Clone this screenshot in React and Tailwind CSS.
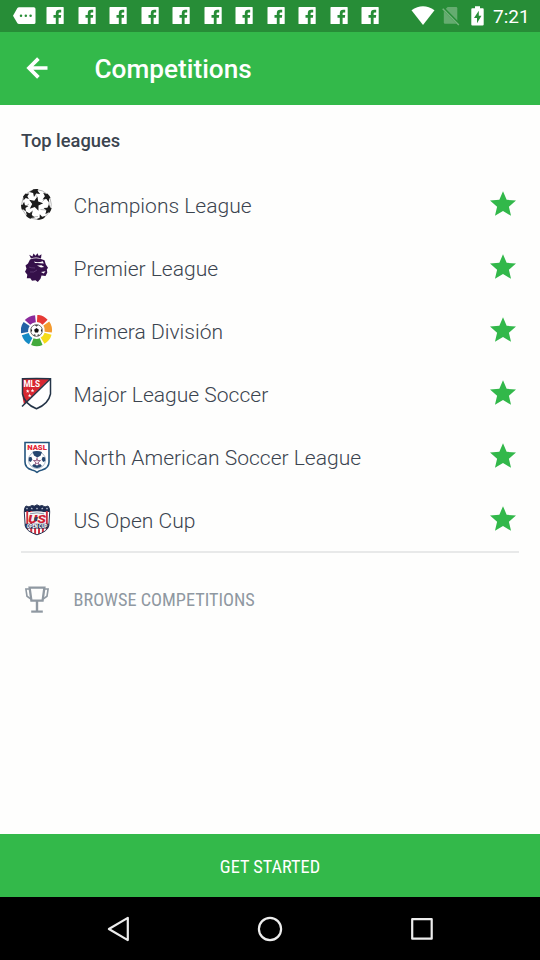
import React from 'react';

const starPoints = (cx, cy, r, rot = 0, inner = 0.4) =>
  Array.from({ length: 10 }, (_, i) => {
    const a = ((rot - 90 + i * 36) * Math.PI) / 180;
    const d = i % 2 ? r * inner : r;
    return `${(cx + d * Math.cos(a)).toFixed(2)},${(cy + d * Math.sin(a)).toFixed(2)}`;
  }).join(' ');

function ChampionsLogo() {
  return (
    <svg width="32" height="32" viewBox="0 0 32 32">
      <clipPath id="ball"><circle cx="15.5" cy="15.5" r="15.5" /></clipPath>
      <circle cx="15.5" cy="15.5" r="14.8" fill="#fff" stroke="#999" strokeWidth="0.7" />
      <g clipPath="url(#ball)" fill="#1c1c1c">
        <polygon points={starPoints(14.6, 14.8, 7.6, 14, 0.45)} />
        <polygon points={starPoints(14, 2.2, 5.8, 190, 0.45)} />
        <polygon points={starPoints(26.5, 7.6, 5.8, 240, 0.45)} />
        <polygon points={starPoints(27.8, 20.8, 5.6, 290, 0.45)} />
        <polygon points={starPoints(20.5, 30, 5, 340, 0.45)} />
        <polygon points={starPoints(8.3, 26.8, 5.8, 35, 0.45)} />
        <polygon points={starPoints(2.4, 18, 5.2, 80, 0.45)} />
        <polygon points={starPoints(4.2, 7, 4.8, 130, 0.45)} />
        <path d="M15.5 7.8L14.5 5M21.5 12.5L24.5 9.5M19.5 20.5L25 21M11.5 21.5L9.5 24.5M8 15L5 17M17 27.5L11 28M28 12V17" stroke="#777" strokeWidth="0.5" />
      </g>
    </svg>
  );
}

function PremierLogo() {
  return (
    <svg width="32" height="32" viewBox="0 0 32 32">
      <g fill="#35104a">
        <path d="M10 6.4 L8.2 2.8 11.4 4.4 12.5 1.6 14.6 3.8 16.4 1.2 17.8 4 20.5 2.2 20 6.4 Q15 4.6 10 6.4Z" />
        <path d="M9 7.4 Q16 4.8 23.5 8.2 L24.8 12.5 27 15.7 25.8 17.4 26.3 20.5 24.5 24 20.5 23.6 19.5 26.8 16.8 30 14.5 28.3 11 28.8 9.3 26.3 5.8 26.2 6.3 22.8 4 19.8 5.5 16.8 4.5 13.5 7 11.5Z" />
      </g>
      <path d="M13 9.4 Q16.5 11 21.8 9.3 L22.8 11.6 Q18 10.6 14 11ZM16 13.6 L20.5 13.2 23.2 15 20 15.4ZM20 20 L24.6 19.2 22.6 21.6Z" fill="#fff" />
      <path d="M8 15 Q10 16 14 16 M9 20 Q13 21 16 18" stroke="#7b5990" strokeWidth="0.5" fill="none" />
    </svg>
  );
}

const ligaColors = ['#e63a35', '#f39a2f', '#f5dc18', '#43aa3c', '#168bc5', '#2362a5', '#8b2b9b'];

function LigaLogo() {
  return (
    <svg width="32" height="32" viewBox="0.5 0.5 32 32">
      {ligaColors.map((color, i) => (
        <path key={color} d="M10.4 1.4 Q16 -.9 21.8 1.7 L19.2 8.4 Q16.3 7 13 8.1Z" fill={color} transform={`rotate(${24 + i * 51.43} 16 16)`} />
      ))}
      <circle cx="16" cy="16" r="5.9" fill="#fff" stroke="#333" strokeWidth="0.7" />
      <polygon points="16,13.5 18.4,15.2 17.5,18 14.5,18 13.6,15.2" fill="#111" />
      <path d="M14.2 10.7h3.6L16 12zM21.4 14l-1.1 2 1 1.8zM10.6 14l1.1 2-1 1.8zM12.7 20.5l2-.7.2 1.7zM19.3 20.5l-2-.7-.2 1.7z" fill="#111" />
    </svg>
  );
}

function MlsLogo() {
  return (
    <svg width="32" height="34" viewBox="0.5 0 32 34">
      <path d="M2 1.8 Q16 1 30 1.8 V17 Q28 27 16 31.7 Q4 27 2 17Z" fill="#fff" />
      <path d="M2 2H29L3.5 27.5 Q2 23 2 16Z" fill="#d82731" />
      <path d="M30 1.8L1.5 29.5" stroke="#243447" strokeWidth="1.5" />
      <path d="M2 1.8 Q16 1 30 1.8 V17 Q28 27 16 31.7 Q4 27 2 17Z" fill="none" stroke="#243447" strokeWidth="1.5" />
      <text x="3" y="9.8" fill="#fff" fontFamily="Roboto, sans-serif" fontWeight="700" fontSize="8.5" textLength="16.5" lengthAdjust="spacingAndGlyphs">MLS</text>
      <g fill="#fff">
        <polygon points={starPoints(7.2, 14.2, 2)} />
        <polygon points={starPoints(12, 13.6, 2)} />
        <polygon points={starPoints(9.2, 18.6, 2)} />
      </g>
    </svg>
  );
}

function NaslLogo() {
  return (
    <svg width="32" height="34" viewBox="0 0 32 34">
      <path d="M4 2.5H28V22Q28 28 21 30Q18 30.7 16 32.3Q14 30.7 11 30Q4 28 4 22Z" fill="#fff" stroke="#24547d" strokeWidth="1.6" />
      <text x="6.2" y="9.8" fill="#e52635" fontFamily="Roboto, sans-serif" fontWeight="900" fontSize="7.5" textLength="19.6" lengthAdjust="spacingAndGlyphs">NASL</text>
      <circle cx="16" cy="20" r="8.5" fill="#fff" stroke="#8a9eb4" strokeWidth="0.7" />
      <g fill="#25466f">
        <path d="M11.5 11.7Q16 10 21 12L19.5 15.8 16.3 17.6 13 15.5Z" />
        <path d="M7.8 17.5L10.3 16.8 11.4 19.4 9.8 22 7.8 21ZM24.2 17.5L21.7 16.8 20.6 19.4 22.2 22 24.2 21Z" />
        <path d="M11 26L12.8 24 16 25.5 19.2 24 21 26Q16 30 11 26Z" />
      </g>
      <polygon points={starPoints(16, 21.7, 4.6)} fill="#7d3e69" />
      <polygon points={starPoints(16, 21.8, 2.7)} fill="#efdfe8" />
    </svg>
  );
}

function OpenCupLogo() {
  return (
    <svg width="32" height="34" viewBox="0 0 32 34">
      <clipPath id="shield"><path d="M5 3Q8 5 11 2.5Q13.5 4 16 1.8Q18.5 4 21 2.5Q24 5 27 3Q29 5 28.7 9L27.8 23Q26.5 28.5 16 31.8Q5.5 28.5 4.2 23L3.3 9Q3 5 5 3Z" /></clipPath>
      <g clipPath="url(#shield)">
        <path fill="#fff" d="M0 0H32V34H0z" />
        <path fill="#1d2b50" d="M0 0H32V9H0z" />
        <path d="M6.3 8V29M10.2 8V31M14.1 21V32M18 21V32M21.9 21V31M25.8 8V29" stroke="#cf3040" strokeWidth="2" />
        <path d="M7.5 9.4Q16 7 24.5 9.4V12.5H7.5Z" fill="#f8f8f8" />
        {[6, 10.8, 16, 21.2, 26].map((x) => <polygon key={x} points={starPoints(x, 5.6, 1.25)} fill="#dfe5ef" />)}
        <path d="M9 10.8Q16 8.9 23 10.8" stroke="#718098" strokeWidth="0.8" fill="none" />
        <path fill="#f8f2f2" d="M7.5 12h17v8H7.5z" />
        <path fill="#1d2b50" d="M4 20.8h24v4.6H4z" />
      </g>
      <text x="7" y="20" fill="#ce2133" fontFamily="Roboto, sans-serif" fontStyle="italic" fontWeight="900" fontSize="10" textLength="18" lengthAdjust="spacingAndGlyphs">US</text>
      <path d="M13.4 14.4L17 13.7 16 18.2 13.4 17.8Z" fill="#2f4164" />
      <text x="5.8" y="24.9" fill="#fff" fontFamily="Roboto, sans-serif" fontWeight="900" fontSize="4.8" textLength="20.4" lengthAdjust="spacingAndGlyphs">OPEN CUP</text>
      <path d="M5 3Q8 5 11 2.5Q13.5 4 16 1.8Q18.5 4 21 2.5Q24 5 27 3Q29 5 28.7 9L27.8 23Q26.5 28.5 16 31.8Q5.5 28.5 4.2 23L3.3 9Q3 5 5 3Z" fill="none" stroke="#283553" />
    </svg>
  );
}

const leagues = [
  ['Champions League', ChampionsLogo],
  ['Premier League', PremierLogo],
  ['Primera División', LigaLogo],
  ['Major League Soccer', MlsLogo],
  ['North American Soccer League', NaslLogo],
  ['US Open Cup', OpenCupLogo],
];

function StatusBar() {
  return (
    <div className="flex h-[31.5px] shrink-0 items-start bg-[#278d37] pl-[12.5px] pr-[11px] text-white">
      <svg className="mt-[7px] shrink-0" width="23" height="18" viewBox="0 0 23 18">
        <path d="M6 .2H20.8Q22.5.2 22.5 1.9V15.4Q22.5 17.1 20.8 17.1H6Q5 17.1 4.4 16.3L0 8.7 4.4 1Q5 .2 6 .2Z" fill="currentColor" />
        <g fill="#278d37"><circle cx="8" cy="8.7" r="1.25" /><circle cx="12.8" cy="8.7" r="1.25" /><circle cx="17.6" cy="8.7" r="1.25" /></g>
      </svg>
      <div className="ml-[10.7px] mt-[7px] flex gap-[13.5px]">
        {Array.from({ length: 11 }, (_, i) => (
          <svg key={i} width="18" height="18" viewBox="0 0 18 18">
            <rect x="0.5" y="0.1" width="17.2" height="17" rx="0.6" fill="currentColor" />
            <path d="M9.8 17.1V10.8H7.5V8.1H9.8V6.2Q9.8 2.8 13.2 2.8H15.2V5.4H13.8Q12.6 5.4 12.6 6.6V8.1H15.2L14.9 10.8H12.6V17.1Z" fill="#278d37" />
          </svg>
        ))}
      </div>
      <svg className="ml-auto mt-[6px]" width="24" height="20" viewBox="0 0 24 20"><path d="M.5 4.2Q12-3.8 23.5 4.2L12 19Z" fill="currentColor" /></svg>
      <svg className="ml-[7px] mt-[6px]" width="18" height="20" viewBox="0 0 18 20">
        <path d="M5.6.9H14Q15.3.9 15.3 2.2V17.8H3Q1.8 17.8 1.8 16.4V5Z" fill="#65ac70" />
        <path d="M.7 1.8L17 18.3" stroke="#278d37" strokeWidth="3" /><path d="M.7 2.7L16.8 18.9" stroke="#76b57f" strokeWidth="1.4" />
      </svg>
      <svg className="ml-[11px] mt-[5.5px]" width="13" height="20" viewBox="0 0 13 20">
        <path d="M4 .2H9V2.2H11.8Q12.7 2.2 12.7 3.2V18.4Q12.7 19.5 11.6 19.5H1.4Q.3 19.5.3 18.4V3.2Q.3 2.2 1.3 2.2H4Z" fill="currentColor" />
        <path d="M7.8 4.8L3 12H6V17.2L10.5 9.8H7.8Z" fill="#278d37" />
      </svg>
      <span className="ml-[9px] mt-[5px] w-[36px] text-[19px] leading-[23px]">7:21</span>
    </div>
  );
}

export default function App() {
  return (
    <div className="flex h-[960px] w-[540px] flex-col overflow-hidden bg-[#fefefd] font-[Roboto,sans-serif] text-[#3b444f]">
      <StatusBar />
      <header className="flex h-[73.5px] shrink-0 items-center bg-[#33b94a] pl-[26px] text-white">
        <svg width="22" height="22" viewBox="0 0 22 22" fill="none" stroke="currentColor" strokeWidth="3.7"><path d="M21.5 11H3M12.4 1.6L3 11l9.4 9.4" /></svg>
        <h1 className="ml-[46.5px] pt-[1px] text-[26.2px] font-medium leading-8">Competitions</h1>
      </header>
      <main className="flex flex-1 flex-col px-[21px]">
        <h2 className="h-[68px] pt-[24px] text-[18.3px] font-medium leading-6">Top leagues</h2>
        <ul>
          {leagues.map(([name, Logo]) => (
            <li key={name} className="flex h-[63px] items-center">
              <Logo />
              <span className="ml-[20.5px] pt-[3px] text-[21.05px] font-light leading-7">{name}</span>
              <svg className="mb-[2px] ml-auto mr-[3px]" width="26" height="25" viewBox="2 2 20 19"><path d="M12 17.27L18.18 21l-1.64-7.03L22 9.24l-7.19-.61L12 2 9.19 8.63 2 9.24l5.46 4.73L5.82 21z" fill="#32b84a" /></svg>
            </li>
          ))}
        </ul>
        <div className="h-[2px] bg-[#e8e9e9]" />
        <div className="flex h-[94px] items-center text-[#8f98a1]">
          <svg width="32" height="30" viewBox="0 0 32 30" fill="none" stroke="currentColor">
            <path d="M8.6 2.6H23.4L21.6 15.6H10.4Z" strokeWidth="2.3" />
            <path d="M8.8 4H4.9L6 11.2 9.6 13.8M23.2 4H27.1L26 11.2 22.4 13.8" strokeWidth="1.6" />
            <path d="M16 16V26" strokeWidth="2.4" /><path d="M10.2 26.6H21.8" strokeWidth="2.2" />
          </svg>
          <span className="ml-[20.5px] font-['Roboto_Condensed',Roboto,sans-serif] text-[18.25px] leading-6 [font-stretch:75%]">BROWSE COMPETITIONS</span>
        </div>
      </main>
      <button className="flex h-[63px] shrink-0 items-center justify-center bg-[#33b94a] pt-[2px] font-['Roboto_Condensed',Roboto,sans-serif] text-[18.3px] text-white [font-stretch:75%]">GET STARTED</button>
      <nav className="flex h-[63px] shrink-0 items-center justify-between bg-black pl-[106px] pr-[106px] text-[#ededed]">
        <svg width="26" height="26" viewBox="0 0 26 26" fill="none" stroke="currentColor" strokeWidth="2.2" strokeLinejoin="round"><path d="M2.9 13L21.8 1.9V24.1Z" /></svg>
        <svg width="26" height="26" viewBox="0 0 26 26" fill="none" stroke="currentColor" strokeWidth="2.2"><circle cx="13" cy="13" r="11.1" /></svg>
        <svg width="26" height="26" viewBox="0 0 26 26" fill="none" stroke="currentColor" strokeWidth="2.2" strokeLinejoin="round"><rect x="4.2" y="3.2" width="19.5" height="19.5" /></svg>
      </nav>
    </div>
  );
}
